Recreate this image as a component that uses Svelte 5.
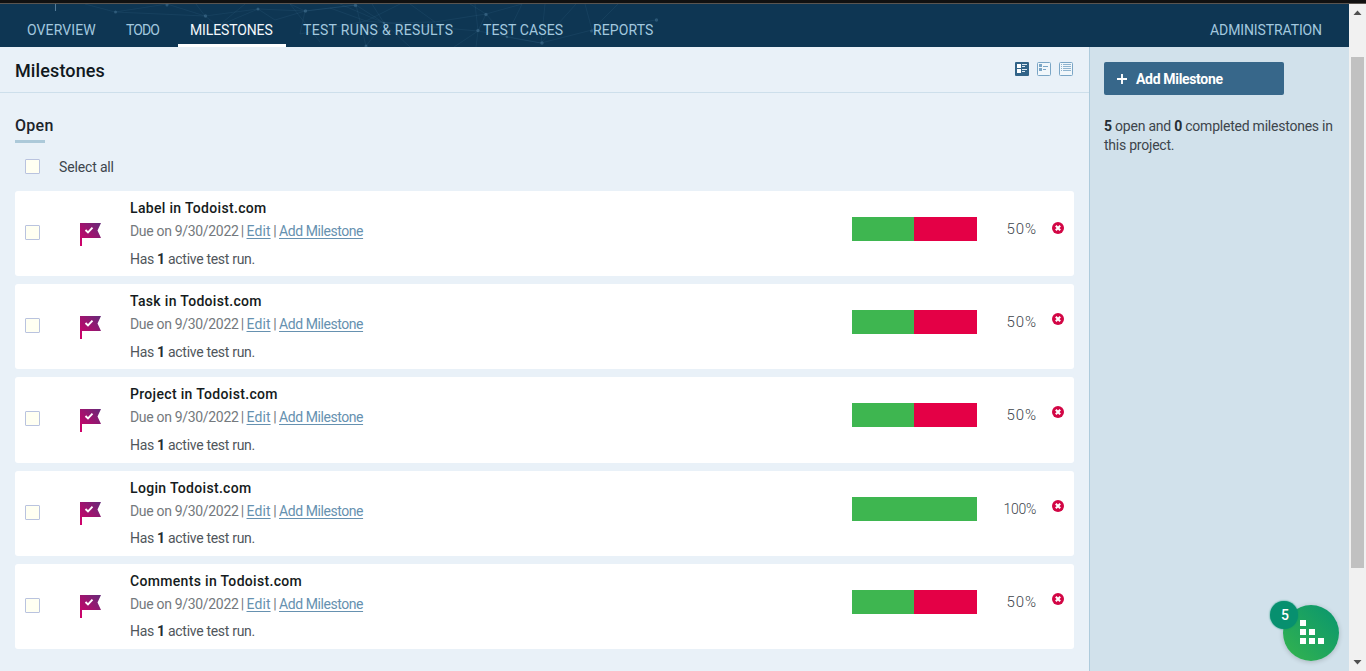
<script>
  const nav = [
    { label: 'OVERVIEW', width: 94, spacing: 0.1 },
    { label: 'TODO', width: 59, spacing: -0.9 },
    { label: 'MILESTONES', width: 108, spacing: -0.13, active: true },
    { label: 'TEST RUNS & RESULTS', width: 175, spacing: 0.33 },
    { label: 'TEST CASES', width: 105, spacing: 0.12 },
    { label: 'REPORTS', width: 86, spacing: 0.12 }
  ];
  const milestones = [
    { name: 'Label in Todoist.com', passed: 50, lift: 0 },
    { name: 'Task in Todoist.com', passed: 50, lift: 2 },
    { name: 'Project in Todoist.com', passed: 50, lift: 2 },
    { name: 'Login Todoist.com', passed: 100, lift: 2 },
    { name: 'Comments in Todoist.com', passed: 50, lift: 2 }
  ];
</script>

<div class="window">
  <div class="chrome"></div>
  <div class="viewport">
    <div class="app">
      <header>
        <svg class="network" width="700" height="43" viewBox="0 4 700 43">
          <g fill="none" stroke="#5b8fb4" stroke-opacity=".16" stroke-width=".7">
            <path d="M85 4L115 12L167 4M115 12L205 16L258 9L305 11L356 5M167 4L205 16L218 26L258 9M205 16L196 4M218 26L245 4M258 9L275 20L305 11L290 4L320 42M305 11L300 34M305 11L356 5L366 46M356 5L384 23L410 47M340 4L384 23L435 22L486 14L478 31L541 43L576 4M410 4L435 22M470 4L486 14L522 4L506 37M478 31L475 4M478 31L476 47M541 43L592 30L656 20M592 30L585 4M592 30L618 4M541 43L545 4M366 46L384 23L372 4M300 34L366 21L478 31L454 47M486 14L506 37L541 43M330 8L366 21L400 4" />
          </g>
          <g fill="#6797b8" fill-opacity=".33">
            <circle cx="115.500" cy="12" r="1.500" /><circle cx="167" cy="5" r="1.500" />
            <circle cx="205.500" cy="16" r="1.700" /><circle cx="258" cy="9" r="1.500" />
            <circle cx="305.500" cy="11" r="1.700" /><circle cx="355.500" cy="5.500" r="1.700" />
            <circle cx="486" cy="14.500" r="1.700" /><circle cx="478" cy="30.500" r="1.700" />
            <circle cx="542" cy="43" r="1.700" /><circle cx="656.500" cy="20" r="1.700" />
            <circle cx="366" cy="46" r="1.500" /><circle cx="384" cy="23" r="1.300" />
            <circle cx="591.500" cy="31" r="1.500" /><circle cx="507" cy="37" r="1.300" />
          </g>
          <path d="M55.500 4V11" stroke="#557c99" />
        </svg>
        <nav>
          {#each nav as item}
            <a class:active={item.active} style="width:{item.width}px;letter-spacing:{item.spacing}px">{item.label}</a>
          {/each}
        </nav>
        <a class="admin">ADMINISTRATION</a>
      </header>

      <div class="columns">
        <main>
          <div class="heading">
            <h1>Milestones</h1>
            <div class="views">
              <svg width="14" height="14" viewBox="0 0 14 14">
                <rect width="14" height="14" rx="1" fill="#326488" />
                <path d="M2 2h4v4H2zM2 7h4v4H2z" fill="#fff" />
                <path d="M7 2.500h5M7 4.500h3M7 7.500h5M7 9.500h3" stroke="#dce9f2" />
              </svg>
              <svg width="14" height="14" viewBox="0 0 14 14">
                <rect x=".5" y=".5" width="13" height="13" rx="1" fill="#f1f7fb" stroke="#7ba6c6" />
                <path d="M2 2h3v3H2zM2 6h3v3H2z" fill="#7ba6c6" />
                <path d="M6 4.500h5M6 7.500h3" stroke="#7ba6c6" />
              </svg>
              <svg width="14" height="14" viewBox="0 0 14 14">
                <rect x=".5" y=".5" width="13" height="13" rx="1" fill="#f1f7fb" stroke="#7ba6c6" />
                <path d="M2 2.500h1M4 2.500h8M2 4.500h1M4 4.500h8M2 6.500h1M4 6.500h8M2 8.500h1M4 8.500h8" stroke="#8fb4cf" />
              </svg>
            </div>
          </div>

          <section>
            <h2>Open</h2>
            <div class="rule"></div>
            <div class="select"><span class="box"></span><span class="caption">Select all</span></div>
            <div class="list">
              {#each milestones as m}
                <article>
                  <span class="box"></span>
                  <svg class="flag" width="22" height="24" viewBox="0 0 22 24">
                    <defs>
                      <linearGradient id="flagfill" x1="0" y1="1" x2="1" y2="0">
                        <stop offset="0" stop-color="#d4006a" />
                        <stop offset=".45" stop-color="#a5116e" />
                        <stop offset="1" stop-color="#642b79" />
                      </linearGradient>
                    </defs>
                    <path d="M0 0H21L17.500 7.500L21 15H2V23H0Z" fill="url(#flagfill)" />
                    <path d="M5.500 7L8 9.500L12.500 4.700" fill="none" stroke="#fff" stroke-width="1.900" />
                  </svg>
                  <div class="info">
                    <h3>{m.name}</h3>
                    <p class="due"><span class="date">Due on 9/30/2022</span><i>|</i><a class="edit">Edit</a><i>|</i><a class="add">Add Milestone</a></p>
                    <p class="runs">Has <b>1</b> active test run.</p>
                  </div>
                  <div class="bar"><div style="width:{m.passed === 100 ? 125 : 62}px"></div></div>
                  <span class="percent" class:full={m.passed === 100}>{m.passed}%</span>
                  <svg class="remove" width="12" height="12" viewBox="0 0 12 12" style="margin-top:{31 - m.lift}px">
                    <circle cx="6" cy="6" r="6" fill="#d20645" />
                    <path d="M3.800 3.800L8.200 8.200M8.200 3.800L3.800 8.200" stroke="#fff" stroke-width="2.100" />
                  </svg>
                </article>
              {/each}
            </div>
          </section>
        </main>

        <aside>
          <button>
            <svg width="10" height="10" viewBox="0 0 10 10"><path d="M0 5H10M5 0V10" stroke="#fff" stroke-width="1.900" /></svg>
            <span>Add Milestone</span>
          </button>
          <p><b>5</b> open and <b>0</b> completed milestones in<br />this project.</p>
        </aside>
      </div>
    </div>

    <div class="scrollbar">
      <svg width="17" height="17" viewBox="0 0 17 17"><path d="M4.500 11L8.500 6.500L12.500 11Z" fill="#505050" /></svg>
      <div class="thumb"></div>
      <svg width="17" height="17" viewBox="0 0 17 17"><path d="M4.500 6L8.500 10.500L12.500 6Z" fill="#505050" /></svg>
    </div>
  </div>

  <div class="launcher">
    <svg width="24" height="24" viewBox="0 0 24 24" fill="#fff">
      <path d="M0 0h6v6H0zM0 9h6v6H0zM9 9h6v6H9zM0 18h6v6H0zM9 18h6v6H9zM18 18h6v6h-6z" />
    </svg>
    <span class="count">5</span>
  </div>
</div>

<style>
  :global(body) { margin: 0; overflow: hidden; }
  .window { position: relative; display: flex; flex-direction: column; width: 1366px; height: 671px; overflow: hidden; font-family: Roboto, "Liberation Sans", sans-serif; font-size: 14px; color: #3d454c; }
  .chrome { height: 3px; background: #111; border-bottom: 1px solid #5a5550; flex: none; }
  .viewport { display: flex; height: 667px; }
  .app { width: 1349px; display: flex; flex-direction: column; }
  h1, h2, h3, p { margin: 0; }
  header { height: 43px; flex: none; background: #0e3653; display: flex; justify-content: space-between; box-sizing: border-box; padding: 0 27px 0 15px; position: relative; }
  .network { position: absolute; left: 0; top: 0; }
  nav { display: flex; gap: 5px; position: relative; }
  nav a { box-sizing: border-box; padding-left: 12px; border-bottom: 3px solid transparent; }
  header a { height: 43px; line-height: 53px; font-size: 14px; letter-spacing: -.11px; color: #a2c8df; white-space: nowrap; box-sizing: border-box; }
  nav a.active { color: #f3f8fc; border-bottom-color: #fff; }
  .columns { display: flex; flex: 1; }
  main { width: 1089px; background: #e9f1f8; border-right: 1px solid #aecbdc; box-sizing: content-box; }
  .heading { height: 45px; border-bottom: 1px solid #cddfeb; display: flex; justify-content: space-between; padding: 0 16px 0 15px; }
  h1 { font-size: 18px; font-weight: 500; color: #111820; line-height: 48px; letter-spacing: .12px; }
  .views { display: flex; gap: 8px; padding-top: 15px; }
  section { padding: 21.500px 15px 0; }
  h2 { font-size: 16px; font-weight: 500; line-height: 22px; color: #1c242b; letter-spacing: .3px; }
  .rule { width: 30px; height: 3px; margin-top: 3.500px; background: #acc9d9; }
  .select { display: flex; align-items: flex-start; height: 16px; margin-top: 16px; padding-left: 10px; gap: 19px; }
  .caption { line-height: 16px; letter-spacing: -.15px; }
  .box { display: block; width: 15px; height: 15px; box-sizing: border-box; border: 1px solid #b9c3df; background: #fffff2; border-radius: 1px; flex: none; }
  .list { display: flex; flex-direction: column; gap: 8px; margin-top: 16px; }
  article { height: 85.200px; background: #fff; border-radius: 3px; display: flex; align-items: flex-start; }
  article .box { margin: 34px 0 0 10px; }
  .flag { margin: 31.600px 0 0 40px; flex: none; }
  .info { width: 722px; margin-left: 28px; white-space: nowrap; }
  h3 { font-size: 14px; font-weight: 500; line-height: 20px; margin-top: 7px; color: #151b20; letter-spacing: .32px; }
  .due { line-height: 20px; margin-top: 3px; color: #74797d; display: flex; }
  .due i { font-style: normal; width: 8px; text-align: center; }
  .date { width: 108.500px; letter-spacing: -.32px; }
  .edit { width: 24.500px; letter-spacing: .1px; }
  .add { letter-spacing: -.43px; }
  .due a { color: #6691b0; text-decoration: underline; text-underline-offset: 2px; }
  .runs { line-height: 20px; margin-top: 7.600px; color: #50565b; letter-spacing: -.3px; }
  b { font-weight: 700; color: #252d34; }
  .bar { width: 125px; height: 24px; margin-top: 26px; background: #e40046; flex: none; }
  .bar div { height: 24px; background: #3eb650; }
  .percent { width: 60px; text-align: right; font-size: 15px; font-weight: 300; line-height: 20px; margin-top: 28px; flex: none; letter-spacing: .9px; }
  .percent.full { width: 59px; margin-right: 1px; font-size: 14px; letter-spacing: -.3px; }
  .remove { margin-left: 15px; flex: none; }
  aside { width: 259px; background: #d1e1eb; padding: 15px 0 0 14px; box-sizing: border-box; }
  button { width: 180px; height: 33px; border: 0; border-radius: 2px; background: #37678a; color: #fff; font: 700 14px Roboto, sans-serif; letter-spacing: -.33px; display: flex; align-items: center; gap: 9px; padding: 0 13px; }
  aside p { margin-top: 22px; line-height: 19px; white-space: nowrap; letter-spacing: -.23px; }
  .scrollbar { width: 17px; background: #f1f1f1; display: flex; flex-direction: column; }
  .thumb { width: 13px; height: 511px; margin: 36px 0 auto 2px; background: #c1c1c1; }
  .scrollbar svg { flex: none; }
  .launcher { position: absolute; left: 1283px; top: 605px; width: 56px; height: 56px; border-radius: 50%; background: linear-gradient(45deg, #35b44d, #08956f); box-shadow: 0 1px 5px #0003; }
  .launcher svg { position: absolute; left: 17px; top: 15px; }
  .count { position: absolute; left: -13px; top: -4px; width: 28px; height: 28px; border-radius: 50%; background: #07906f; box-shadow: 0 0 2px #07906f; color: #fff; font-size: 14px; font-weight: 500; line-height: 28px; text-align: center; text-indent: 2px; }
</style>
